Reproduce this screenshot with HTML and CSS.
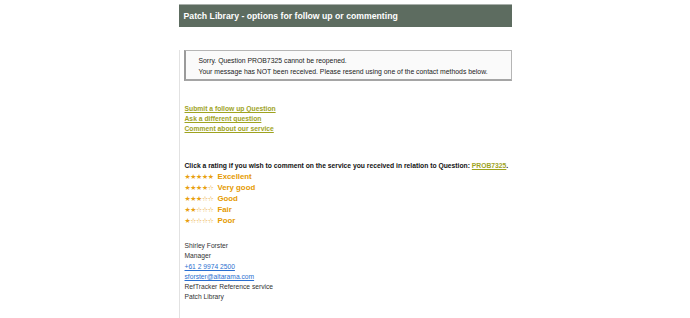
FILE: index.html
```html
<!DOCTYPE html>
<html>
<head>
<meta charset="utf-8">
<link rel="stylesheet" href="styles.css">
</head>
<body>
<div class="page">
  <div class="header">Patch Library - options for follow up or commenting</div>
  <div class="content">
    <div class="notice">
      <div>Sorry. Question PROB7325 cannot be reopened.</div>
      <div>Your message has NOT been received. Please resend using one of the contact methods below.</div>
    </div>
    <div class="links">
      <a href="#">Submit a follow up Question</a>
      <a href="#">Ask a different question</a>
      <a href="#">Comment about our service</a>
    </div>
    <div class="rating">
      <div class="rating-q">Click a rating if you wish to comment on the service you received in relation to Question: <a href="#">PROB7325</a>.</div>
      <div class="rate"><span class="stars">★★★★★</span><span>Excellent</span></div>
      <div class="rate"><span class="stars">★★★★☆</span><span>Very good</span></div>
      <div class="rate"><span class="stars">★★★☆☆</span><span>Good</span></div>
      <div class="rate"><span class="stars">★★☆☆☆</span><span>Fair</span></div>
      <div class="rate"><span class="stars">★☆☆☆☆</span><span>Poor</span></div>
    </div>
    <div class="sig">
      <div>Shirley Forster</div>
      <div>Manager</div>
      <div><a href="#">+61 2 9974 2500</a></div>
      <div><a href="#">sforster@altarama.com</a></div>
      <div>RefTracker Reference service</div>
      <div>Patch Library</div>
    </div>
  </div>
</div>
</body>
</html>
```
FILE: styles.css
```css
html, body {
  margin: 0;
  background: #ffffff;
}
body {
  font-family: "Liberation Sans", Arial, sans-serif;
  color: #222;
}
.page {
  width: 333px;
  margin: 4px auto 0;
}
.header {
  background: #5d6c60;
  border-top: 1px solid #a9b0ab;
  height: 22px;
  color: #fff;
  font-weight: bold;
  font-size: 8.7px;
  line-height: 22px;
  padding-left: 5px;
}
.content {
  border-left: 1px solid #e2e2e2;
  height: 278px;
}
.notice {
  margin: 23px 0 0 4px;
  border: 1px solid #b5b5b5;
  border-left: 2px solid #9a9a9a;
  border-bottom: 2px solid #a5a5a5;
  background: #fafafa;
  padding: 4px 0 0 13px;
  box-sizing: border-box;
  height: 31px;
  font-size: 6.85px;
  line-height: 11px;
  color: #222;
}
.links {
  margin: 23px 0 0 5px;
  display: flex;
  flex-direction: column;
  align-items: flex-start;
}
.links a {
  color: #9ea31e;
  font-weight: bold;
  font-size: 6.75px;
  line-height: 10px;
}
.rating {
  margin: 26px 0 0 5px;
}
.rating-q {
  font-size: 6.75px;
  font-weight: bold;
  color: #111;
  line-height: 11px;
  white-space: nowrap;
}
.rating-q a {
  color: #9ea31e;
}
.rate {
  display: flex;
  align-items: center;
  gap: 4px;
  height: 11px;
  color: #e59a00;
  font-weight: bold;
  font-size: 7.8px;
}
.stars {
  font-size: 6.8px;
  font-family: "DejaVu Sans", sans-serif;
  letter-spacing: -0.3px;
  color: #e8a010;
}
.sig {
  margin: 15px 0 0 5px;
  font-size: 6.7px;
  line-height: 10.3px;
  color: #333;
}
.sig a {
  color: #2a6fd0;
}
```
